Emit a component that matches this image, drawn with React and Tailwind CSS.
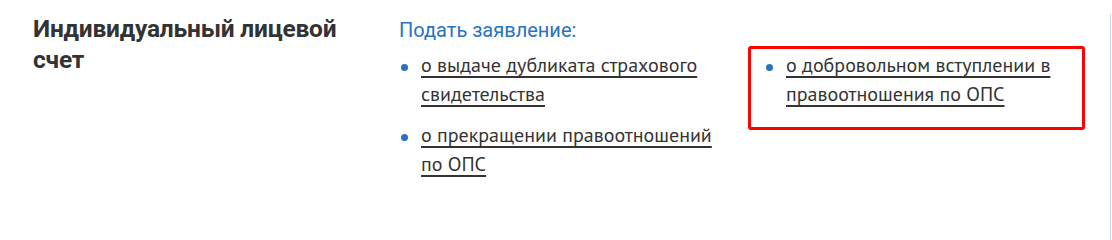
import React from "react";

const body = { fontFamily: '"PT Sans", "Noto Sans", "Liberation Sans", sans-serif' };

function Item({ children }) {
  return (
    <li className="flex items-start">
      <span className="mt-[13px] mr-[13px] h-[7px] w-[7px] shrink-0 rounded-full bg-[#2a72c0]" />
      <a href="#" className="text-[20px] leading-[29px] text-[#333333] underline underline-offset-[4px] decoration-[1.5px]" style={body}>
        {children}
      </a>
    </li>
  );
}

export default function App() {
  return (
    <div className="relative h-[240px] w-[1112px] bg-white">
      <div className="absolute right-[1px] top-[14px] bottom-0 w-px bg-[#c9d8ea]" />
      <div className="flex pt-[13px]">
        <div className="w-[399px] pl-[33px] pr-4">
          <h2 className="text-[24.5px] font-bold leading-[31px] text-[#333333] tracking-[-0.2px]" style={{ fontFamily: 'Roboto, "Liberation Sans", sans-serif' }}>
            Индивидуальный лицевой счет
          </h2>
        </div>
        <div className="w-[349px] pr-[20px]">
          <div className="pt-[3px] text-[20px] leading-[28px] text-[#2673c0]" style={{ fontFamily: 'Roboto, "Liberation Sans", sans-serif' }}>
            Подать заявление:
          </div>
          <ul className="mt-[7px] flex flex-col gap-[12px] pl-[2px]">
            <Item>о выдаче дубликата страхового свидетельства</Item>
            <Item>о прекращении правоотношений по ОПС</Item>
          </ul>
        </div>
        <div className="mt-[33px]">
          <div className="h-[84px] w-[337px] rounded-[3px] border-[3px] border-[#ff0000] pl-[15px] pt-[2px]">
            <ul>
              <Item>о добровольном вступлении в правоотношения по ОПС</Item>
            </ul>
          </div>
        </div>
      </div>
    </div>
  );
}
